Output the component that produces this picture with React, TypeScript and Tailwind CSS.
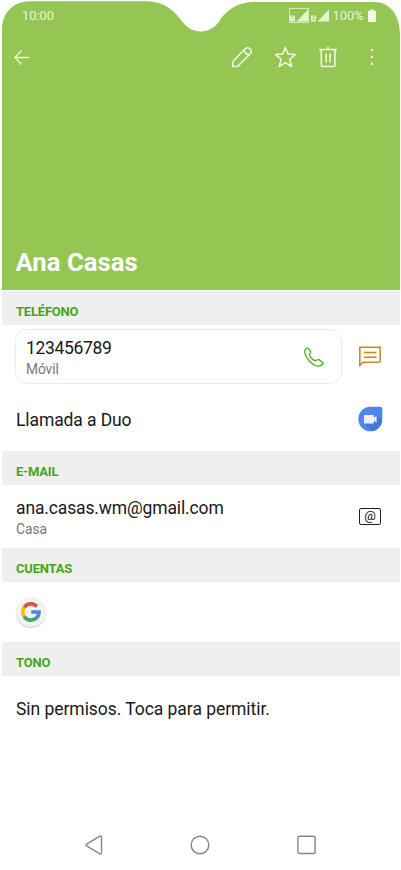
import React from 'react';

const SectionTitle: React.FC<{ label: string }> = ({ label }) => (
  <h2 className="h-[34px] bg-[#efefef] pl-[14px] pt-[11px] text-[13px] leading-[19px] font-bold tracking-[-0.2px] text-[#43a816]">
    {label}
  </h2>
);

const SignalIcon: React.FC<{ sim: string; boxed?: boolean }> = ({ sim, boxed }) => (
  <svg width="20" height="15" viewBox="0 0 20 15" fill="none">
    {boxed && <rect x="0.5" y="0.5" width="19" height="14" stroke="#e6f5cf" strokeWidth="0.8" />}
    <path d="M19 1.5V13.5H7.5Z" fill="#e6f5cf" />
    <rect x="1" y="7.5" width="5" height="6" rx="0.8" fill="#e6f5cf" />
    <text x="2.2" y="12.3" fontSize="5" fontFamily="Roboto, sans-serif" fill="#7fb03f">{sim}</text>
  </svg>
);

const StatusBar = () => (
  <div className="flex h-[31px] items-center justify-between pl-[20px] pr-[24px] text-[12.8px] text-[#e9f6d6]">
    <span>10:00</span>
    <div className="flex items-center">
      <SignalIcon sim="1" boxed />
      <span className="ml-[1px]">
        <SignalIcon sim="2" />
      </span>
      <span className="ml-[2.5px] w-[31.5px] whitespace-nowrap">100%</span>
      <svg className="ml-[4px]" width="8" height="13" viewBox="0 0 8 13" fill="#f0fae0">
        <path d="M2 0.5H6V1.8H7.2Q8 1.8 8 2.6V12.2Q8 13 7.2 13H0.8Q0 13 0 12.2V2.6Q0 1.8 0.8 1.8H2Z" />
      </svg>
    </div>
  </div>
);

const Toolbar = () => (
  <div className="mt-[12px] flex h-7 items-center pl-[12px] pr-[26px] text-[#f4fde4]">
    <svg width="16" height="16" viewBox="0 0 16 16" fill="none" stroke="currentColor" strokeWidth="1.3">
      <path d="M15.2 8.5H1M7.5 1.5L0.8 8.5L7.5 15.5" />
    </svg>
    <div className="ml-auto flex items-center">
      <svg width="22" height="22" viewBox="0 0 22 22" fill="none" stroke="currentColor" strokeWidth="1.5" strokeLinejoin="round">
        <path d="M1.7 20.5L2 15.2L14.2 2.8Q16.3 0.8 18.6 2.5L19.4 3.3Q21.3 5.5 19.3 7.8L6.8 20.3Z" />
        <path d="M13.4 3.8Q13.5 8.3 18.1 8.8" />
      </svg>
      <svg className="ml-[20px]" width="24" height="24" viewBox="0 0 24 24" fill="none" stroke="currentColor" strokeWidth="1.5" strokeLinejoin="round">
        <path d="M12.4 2.4L15 9L22.2 9.6L16.7 14.3L18.6 21.5L12.4 17.6L6.2 21.5L8.1 14.3L2.6 9.6L9.8 9Z" />
      </svg>
      <svg className="ml-[21px]" width="20" height="22" viewBox="0 0 20 22" fill="none" stroke="currentColor" strokeWidth="1.5">
        <path d="M1.2 3.5H19M10 0.8V3.5M3.3 3.5V18.7Q3.3 20.6 5.2 20.6H15Q16.9 20.6 16.9 18.7V3.5M8.2 7.5V16.5M12 7.5V16.5" />
      </svg>
      <svg className="ml-[32px]" width="4" height="20" viewBox="0 0 4 20" fill="currentColor">
        <circle cx="1.8" cy="3" r="1.3" />
        <circle cx="1.8" cy="10" r="1.3" />
        <circle cx="1.8" cy="16.8" r="1.3" />
      </svg>
    </div>
  </div>
);

const Header = () => (
  <header className="relative flex h-[290px] flex-col">
    {/* Green cover with the camera notch */}
    <svg className="absolute inset-0" width="398" height="290" viewBox="2 0 398 290">
      <path
        d="M2 290V30C2 13 13 1.3 30 1.3H144C163 1.3 173 9 181 20C186 27 192 31.4 201 31.4C209 31.4 216 27 220 20C227 10 237 2 255 2H374C390 2 400 15 400 35V290Z"
        fill="#95c653"
      />
    </svg>
    <div className="relative flex flex-1 flex-col">
      <StatusBar />
      <Toolbar />
      <h1 className="mt-auto pb-[12px] pl-[13.5px] text-[25.7px] leading-8 font-bold text-white">Ana Casas</h1>
    </div>
  </header>
);

const PhoneSection = () => (
  <section>
    <SectionTitle label="TELÉFONO" />
    <div className="flex items-center pl-[13px] pr-[18px] pt-[4px]">
      <div className="flex h-[55px] w-[327px] items-center rounded-[12px] border border-[#ececec] pl-[10px] pr-[17px]">
        <div className="pt-[4px]">
          <p className="text-[17.5px] leading-[21px] tracking-[-0.35px] text-[#191919]">123456789</p>
          <p className="text-[13.8px] leading-[21px] tracking-[-0.1px] text-[#777]">Móvil</p>
        </div>
        <svg className="ml-auto" width="20" height="20" viewBox="0 0 20 20" fill="none" stroke="#4fae25" strokeWidth="1.3" strokeLinejoin="round">
          <path d="M3.5 1C1.2 1.8 0.4 4 1 6.3C2.5 12 7.8 17.5 12.6 18.8C15.4 19.5 18.2 18.5 19.3 16.3C17.8 14.7 16.4 13.4 14.7 12.4C13.6 12.3 12.8 13.5 11.4 13.9C9.2 13 6.3 10.2 5.4 8C5.6 6.7 7 6 6.8 4.9C6 3.2 4.8 1.8 3.5 1Z" />
        </svg>
      </div>
      <svg className="ml-auto" width="24" height="22" viewBox="0 0 24 22" fill="none" stroke="#c98529" strokeWidth="1.5">
        <path d="M1.8 1.2H22.2V14.7Q22.2 16.3 20.7 16.3H5.2L1.8 19.3Z" fill="#fffbed" />
        <path d="M6 6.6H18.5M6 11.3H18.5" />
      </svg>
    </div>
    <div className="flex h-[67px] items-center pl-[14px] pr-[17px] pt-[3px]">
      <p className="pt-[2px] text-[17.5px] leading-6 tracking-[-0.1px] text-[#191919]">Llamada a Duo</p>
      <svg className="ml-auto" width="25" height="26" viewBox="0 0 25 26">
        <path d="M12.3 0.7H22.5Q24.3 0.7 24.3 2.5V13A12 12.3 0 1 1 12.3 0.7Z" fill="#4c86ee" />
        <path d="M18.5 9L24.2 14.2C23.7 20 19.5 24.4 14.5 25L6.5 17.2Z" fill="#4377dd" />
        <path d="M6.8 9H15Q15.9 9 15.9 9.9V11.8L18.6 9.7V16.7L15.9 14.6V16.7Q15.9 17.6 15 17.6H6.8Q5.9 17.6 5.9 16.7V9.9Q5.9 9 6.8 9Z" fill="#eceff5" />
      </svg>
    </div>
  </section>
);

const EmailSection = () => (
  <section>
    <SectionTitle label="E-MAIL" />
    <div className="flex h-[63px] items-center pl-[14px] pr-[19px]">
      <div className="pt-[5px]">
        <p className="text-[17.5px] leading-[21px] tracking-[-0.14px] text-[#191919]">ana.casas.wm@gmail.com</p>
        <p className="text-[13.8px] leading-[21px] text-[#777]">Casa</p>
      </div>
      <div className="ml-auto flex h-[17px] w-[22px] items-center justify-center rounded-[2px] border-[1.5px] border-[#222] pb-[3px] text-[13px] leading-none text-[#111]">
        @
      </div>
    </div>
  </section>
);

const AccountsSection = () => (
  <section>
    <SectionTitle label="CUENTAS" />
    <div className="flex h-[60px] items-center pl-[14px]">
      <div className="flex h-[30px] w-[30px] items-center justify-center rounded-full bg-[#f3f3f3] shadow-[0_1px_1px_#ccc]">
        <svg width="20" height="20" viewBox="0 0 20 20" fill="none" strokeWidth="3.7">
          <path d="M3.2 5.4A8 8 0 0 1 15.8 4.4" stroke="#e05145" />
          <path d="M3.2 14.5A8 8 0 0 1 3.2 5.4" stroke="#f8bc15" />
          <path d="M15.4 15.9A8 8 0 0 1 3.2 14.5" stroke="#40a65a" />
          <path d="M10.3 10H18Q18 13.8 15.3 15.9" stroke="#4a86ec" />
        </svg>
      </div>
    </div>
  </section>
);

const RingtoneSection = () => (
  <section>
    <SectionTitle label="TONO" />
    <p className="pl-[14px] pt-[21px] text-[17.5px] leading-6 tracking-[-0.05px] text-[#191919]">Sin permisos. Toca para permitir.</p>
  </section>
);

const NavigationBar = () => (
  <nav className="mt-auto flex h-[50px] items-center justify-between pl-[83px] pr-[84px]">
    <svg width="18" height="20" viewBox="0 0 18 20" fill="none" stroke="#868686" strokeWidth="1.4" strokeLinejoin="round">
      <path d="M14.8 1.2Q16.5 0.4 16.5 2.2V17.8Q16.5 19.6 14.8 18.8L2 11.2Q0.2 10 2 8.8Z" />
    </svg>
    <svg width="20" height="20" viewBox="0 0 20 20" fill="none" stroke="#868686" strokeWidth="1.4">
      <circle cx="10" cy="10" r="8.8" />
    </svg>
    <svg width="19" height="20" viewBox="0 0 19 20" fill="none" stroke="#868686" strokeWidth="1.4">
      <rect x="0.9" y="1.3" width="17.2" height="17.2" rx="1.8" />
    </svg>
  </nav>
);

export default function App() {
  return (
    <div className="flex h-[870px] w-[401px] flex-col overflow-hidden bg-white pl-[2px] pr-px font-['Roboto',sans-serif]">
      <Header />
      <main className="pt-px">
        <PhoneSection />
        <EmailSection />
        <AccountsSection />
        <RingtoneSection />
      </main>
      <NavigationBar />
    </div>
  );
}
